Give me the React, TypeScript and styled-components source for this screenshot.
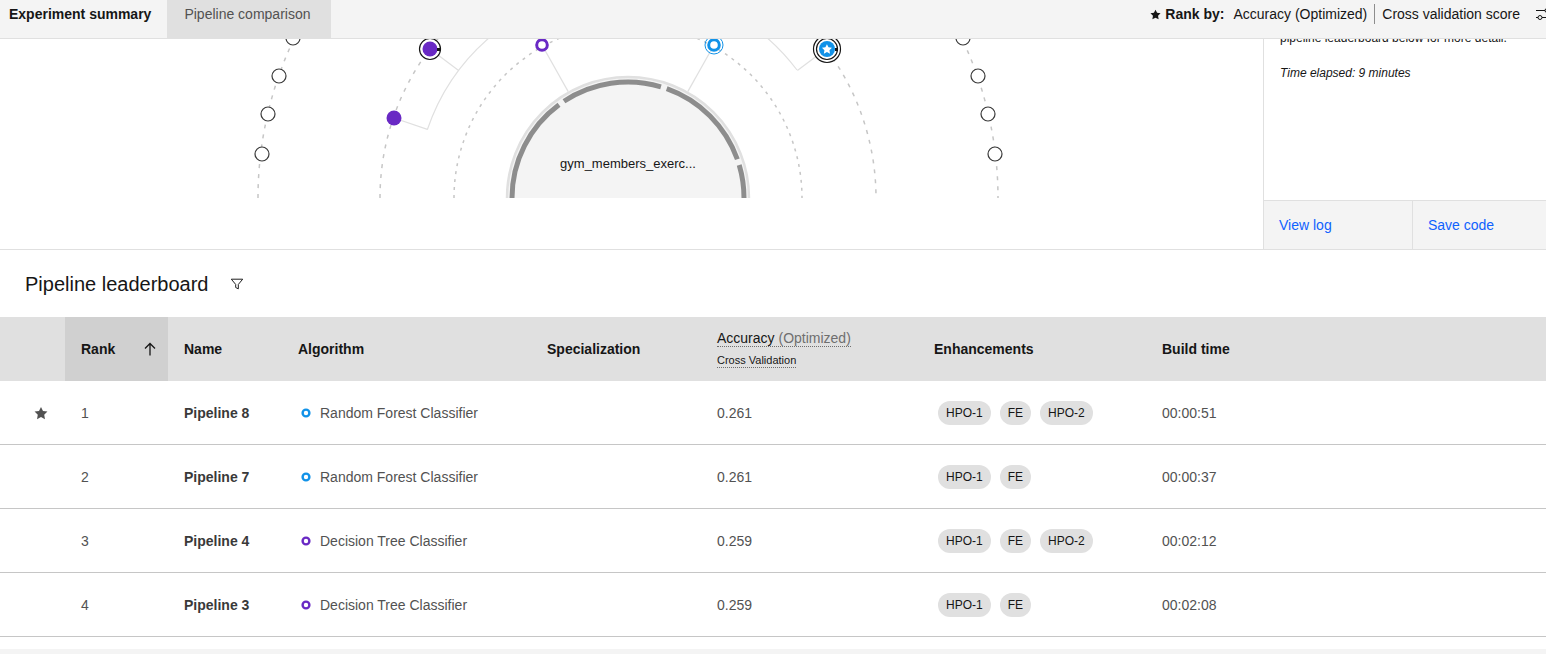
import React from 'react';
import styled, { createGlobalStyle } from 'styled-components';

const GlobalStyle = createGlobalStyle`
  html, body { margin: 0; padding: 0; background: #f4f4f4; }
  body { font-family: "Liberation Sans", Arial, sans-serif; color: #161616; overflow: hidden; }
  * { box-sizing: border-box; }
`;

const Page = styled.div`
  width: 1546px;
  background: #ffffff;
  padding-bottom: 12px;
`;

const TopBar = styled.div`
  display: flex;
  align-items: flex-start;
  height: 39px;
  background: #f4f4f4;
  border-bottom: 1px solid #e0e0e0;
  overflow: hidden;
`;

const Tab = styled.div<{ $active?: boolean }>`
  height: 38px;
  padding: 5px 17px 0;
  line-height: 18px;
  font-size: 14px;
  white-space: nowrap;
  font-weight: ${(p) => (p.$active ? 700 : 400)};
  color: ${(p) => (p.$active ? '#161616' : '#525252')};
  background: ${(p) => (p.$active ? '#f4f4f4' : '#e0e0e0')};
  min-width: ${(p) => (p.$active ? '167px' : '164px')};
  &:first-child { padding-left: 9px; padding-right: 16px; }
`;

const RankBy = styled.div`
  margin-left: auto;
  margin-right: -22px;
  display: flex;
  align-items: center;
  height: 28px;
  font-size: 14px;
  white-space: nowrap;
  flex-shrink: 0;
`;

const RankLabel = styled.span`
  display: flex;
  align-items: center;
  gap: 4px;
  font-weight: 700;
  margin-right: 9px;
`;

const RankOption = styled.span`
  color: #161616;
`;

const Divider = styled.span`
  width: 1px;
  height: 20px;
  background: #8d8d8d;
  margin: 0 7px;
`;

const AdjustIcon = styled.svg`
  margin-left: 16px;
  margin-right: 16px;
  flex-shrink: 0;
`;

const Summary = styled.div`
  display: flex;
  height: 211px;
  border-bottom: 1px solid #e0e0e0;
  background: #ffffff;
`;

const Diagram = styled.div`
  flex: 1;
  overflow: hidden;
  svg { display: block; }
`;

const SidePanel = styled.div`
  width: 283px;
  border-left: 1px solid #e0e0e0;
  display: flex;
  flex-direction: column;
`;

const PanelBody = styled.div`
  flex: 1;
  overflow: hidden;
  padding: 0 16px;
`;

const Desc = styled.p`
  margin: -10px 0 0;
  font-size: 12px;
  line-height: 18px;
  white-space: nowrap;
`;

const Elapsed = styled.p`
  margin: 17px 0 0;
  font-size: 12px;
  line-height: 18px;
  font-style: italic;
`;

const PanelActions = styled.div`
  display: flex;
  height: 49px;
  border-top: 1px solid #e0e0e0;
  background: #f4f4f4;
`;

const ActionLink = styled.a`
  display: flex;
  align-items: center;
  width: 148px;
  padding-left: 15px;
  font-size: 14px;
  color: #0f62fe;
  text-decoration: none;
  & + & { flex: 1; border-left: 1px solid #e0e0e0; padding-left: 15px; }
`;

const LeaderHead = styled.div`
  display: flex;
  align-items: center;
  gap: 22px;
  padding: 20px 25px 19px;
`;

const Title = styled.h2`
  margin: 0;
  font-size: 20px;
  line-height: 28px;
  font-weight: 400;
  color: #161616;
`;

const COLS = '65px 103px 114px 249px 170px 217px 228px 1fr';

const HeadRow = styled.div`
  display: grid;
  grid-template-columns: ${COLS};
  height: 64px;
  background: #e0e0e0;
`;

const Row = styled.div`
  display: grid;
  grid-template-columns: ${COLS};
  height: 64px;
  border-bottom: 1px solid #c6c6c6;
  background: #ffffff;
`;

const HeadCell = styled.div<{ $sorted?: boolean }>`
  display: flex;
  align-items: center;
  justify-content: space-between;
  padding: 0 10px 0 16px;
  font-size: 14px;
  font-weight: 700;
  color: #161616;
  background: ${(p) => (p.$sorted ? '#d0d0d0' : 'transparent')};
`;

const MetricHead = styled.div`
  display: flex;
  flex-direction: column;
  justify-content: center;
  align-items: flex-start;
  gap: 6px;
  padding: 0 16px;
`;

const MetricMain = styled.span`
  font-size: 14px;
  line-height: 16px;
  color: #161616;
  border-bottom: 1px dotted #6f6f6f;
`;

const MetricNote = styled.span`
  color: #6f6f6f;
`;

const MetricSub = styled.span`
  font-size: 11px;
  line-height: 14px;
  color: #161616;
  border-bottom: 1px dotted #6f6f6f;
`;

const Cell = styled.div<{ $bold?: boolean }>`
  display: flex;
  align-items: center;
  gap: 6px;
  padding: 0 16px;
  font-size: 14px;
  font-weight: ${(p) => (p.$bold ? 700 : 400)};
  color: ${(p) => (p.$bold ? '#393939' : '#525252')};
  white-space: nowrap;
`;

const StarCell = styled.div`
  display: flex;
  align-items: center;
  padding-left: 34px;
`;

const Tags = styled.div`
  display: flex;
  align-items: center;
  gap: 9px;
  padding-left: 20px;
`;

const Tag = styled.span`
  display: inline-flex;
  align-items: center;
  height: 24px;
  padding: 0 8px;
  border-radius: 12px;
  background: #e0e0e0;
  color: #161616;
  font-size: 12px;
`;

const PURPLE = '#6929c4';
const BLUE = '#1192e8';

const StarIcon = ({ size, color }: { size: number; color: string }) => (
  <svg width={size} height={size} viewBox="0 0 32 32">
    <path
      fill={color}
      d="M16 2l-4.55 9.22-10.17 1.47 7.36 7.18L6.9 30 16 25.22 25.1 30l-1.74-10.13 7.36-7.17-10.17-1.48z"
    />
  </svg>
);

const AlgoDot = ({ color }: { color: string }) => (
  <svg width="16" height="16" viewBox="0 0 16 16">
    <circle cx="8" cy="8" r="3.4" fill="none" stroke={color} strokeWidth="2.4" />
  </svg>
);

const CX = 628;
const CY = 198;
const pt = (r: number, deg: number) => {
  const a = (deg * Math.PI) / 180;
  return [CX + r * Math.cos(a), CY - r * Math.sin(a)];
};
const angOf = (x: number, y: number) => (Math.atan2(CY - y, x - CX) * 180) / Math.PI;
const arc = (r: number, a1: number, a2: number) => {
  const [x1, y1] = pt(r, a1);
  const [x2, y2] = pt(r, a2);
  const large = Math.abs(a1 - a2) > 180 ? 1 : 0;
  return `M ${x1} ${y1} A ${r} ${r} 0 ${large} 1 ${x2} ${y2}`;
};
const radial = (x: number, y: number, r: number) => {
  const [x2, y2] = pt(r, angOf(x, y));
  return `M ${x} ${y} L ${x2} ${y2}`;
};

const PipelineDiagram = () => {
  const segs: [number, number][] = [
    [180, 126.5],
    [123.5, 73.5],
    [70.5, 19.5],
    [16.5, 0],
  ];
  const outer = [
    [293, 38],
    [279, 76],
    [268, 114],
    [262, 154],
    [963, 38],
    [978, 76],
    [988, 114],
    [995, 154],
  ];
  return (
    <svg width="1263" height="159" viewBox="0 39 1263 159">
      <g fill="none" stroke="#c6c6c6" strokeWidth="1.5">
        <path d={arc(370, 180, 0)} strokeDasharray="4 6" />
        <path d={arc(248, 180, 0)} strokeDasharray="4 6" />
        <path d={arc(174, 180, 0)} strokeDasharray="3 5" />
      </g>
      <g fill="none" stroke="#e0e0e0" strokeWidth="1.2">
        <path d={arc(212, angOf(428, 130), angOf(797, 70))} />
        <path d={radial(542, 45, 122)} />
        <path d={radial(714, 45, 122)} />
        <path d={radial(430, 49, 212)} />
        <path d={radial(394, 118, 212)} />
        <path d={radial(826, 49, 212)} />
      </g>
      <circle cx={CX} cy={CY} r="121" fill="#f4f4f4" stroke="#e0e0e0" strokeWidth="2.5" />
      <g fill="none" stroke="#8d8d8d" strokeWidth="5">
        {segs.map(([a, b]) => (
          <path key={a} d={arc(116, a, b)} />
        ))}
      </g>
      <text
        x={CX}
        y="168"
        textAnchor="middle"
        fontSize="13"
        fontFamily="'Liberation Sans', Arial, sans-serif"
        fill="#161616"
      >
        gym_members_exerc...
      </text>
      {outer.map(([x, y]) => (
        <circle key={`${x}-${y}`} cx={x} cy={y} r="7" fill="#ffffff" stroke="#393939" strokeWidth="1.2" />
      ))}
      <circle cx="542" cy="45" r="5.3" fill="#ffffff" stroke={PURPLE} strokeWidth="3" />
      <circle cx="714" cy="45" r="5.3" fill="#ffffff" stroke={BLUE} strokeWidth="3" />
      <circle cx="714" cy="45" r="9" fill="none" stroke={BLUE} strokeWidth="1" />
      <circle cx="394" cy="118" r="7.5" fill={PURPLE} />
      <circle cx="430" cy="49" r="10.5" fill="#ffffff" stroke="#161616" strokeWidth="1.2" />
      <circle cx="430" cy="49" r="7.5" fill={PURPLE} />
      <rect x="437" y="48" width="3" height="3" fill="#161616" />
      <circle cx="827" cy="49" r="13.5" fill="#ffffff" stroke="#161616" strokeWidth="1.2" />
      <circle cx="827" cy="49" r="10.5" fill="none" stroke="#161616" strokeWidth="1.2" />
      <circle cx="827" cy="49" r="8" fill={BLUE} />
      <g transform="translate(821.5 43.5) scale(0.34)">
        <path
          fill="#ffffff"
          d="M16 2l-4.55 9.22-10.17 1.47 7.36 7.18L6.9 30 16 25.22 25.1 30l-1.74-10.13 7.36-7.17-10.17-1.48z"
        />
      </g>
      <rect x="835" y="48" width="3" height="3" fill="#161616" />
    </svg>
  );
};

type Pipe = {
  rank: number;
  name: string;
  algo: string;
  color: string;
  acc: string;
  tags: string[];
  time: string;
  star?: boolean;
};

const pipes: Pipe[] = [
  { rank: 1, name: 'Pipeline 8', algo: 'Random Forest Classifier', color: BLUE, acc: '0.261', tags: ['HPO-1', 'FE', 'HPO-2'], time: '00:00:51', star: true },
  { rank: 2, name: 'Pipeline 7', algo: 'Random Forest Classifier', color: BLUE, acc: '0.261', tags: ['HPO-1', 'FE'], time: '00:00:37' },
  { rank: 3, name: 'Pipeline 4', algo: 'Decision Tree Classifier', color: PURPLE, acc: '0.259', tags: ['HPO-1', 'FE', 'HPO-2'], time: '00:02:12' },
  { rank: 4, name: 'Pipeline 3', algo: 'Decision Tree Classifier', color: PURPLE, acc: '0.259', tags: ['HPO-1', 'FE'], time: '00:02:08' },
];

export default function App() {
  return (
    <Page>
      <GlobalStyle />
      <TopBar>
        <Tab $active>Experiment summary</Tab>
        <Tab>Pipeline comparison</Tab>
        <RankBy>
          <RankLabel>
            <StarIcon size={11} color="#161616" />
            Rank by:
          </RankLabel>
          <RankOption>Accuracy (Optimized)</RankOption>
          <Divider />
          <RankOption>Cross validation score</RankOption>
          <AdjustIcon width="16" height="16" viewBox="0 0 16 16">
            <g fill="none" stroke="#161616" strokeWidth="1">
              <line x1="0" y1="4.5" x2="16" y2="4.5" />
              <line x1="0" y1="11.5" x2="16" y2="11.5" />
              <circle cx="11" cy="4.5" r="2" fill="#f4f4f4" />
              <circle cx="4" cy="11.5" r="2" fill="#f4f4f4" />
            </g>
          </AdjustIcon>
        </RankBy>
      </TopBar>

      <Summary>
        <Diagram>
          <PipelineDiagram />
        </Diagram>
        <SidePanel>
          <PanelBody>
            <Desc>pipeline leaderboard below for more detail.</Desc>
            <Elapsed>Time elapsed: 9 minutes</Elapsed>
          </PanelBody>
          <PanelActions>
            <ActionLink href="#">View log</ActionLink>
            <ActionLink href="#">Save code</ActionLink>
          </PanelActions>
        </SidePanel>
      </Summary>

      <LeaderHead>
        <Title>Pipeline leaderboard</Title>
        <svg width="14" height="14" viewBox="0 0 16 16">
          <path d="M1.5 2.5h13L9.5 8.5v5l-3-1.5V8.5z" fill="none" stroke="#161616" strokeWidth="1.1" strokeLinejoin="round" />
        </svg>
      </LeaderHead>

      <HeadRow>
        <HeadCell />
        <HeadCell $sorted>
          Rank
          <svg width="16" height="16" viewBox="0 0 16 16">
            <path d="M8 2.5v12M3 7.5l5-5 5 5" fill="none" stroke="#161616" strokeWidth="1.3" />
          </svg>
        </HeadCell>
        <HeadCell>Name</HeadCell>
        <HeadCell>Algorithm</HeadCell>
        <HeadCell>Specialization</HeadCell>
        <MetricHead>
          <MetricMain>
            Accuracy <MetricNote>(Optimized)</MetricNote>
          </MetricMain>
          <MetricSub>Cross Validation</MetricSub>
        </MetricHead>
        <HeadCell>Enhancements</HeadCell>
        <HeadCell>Build time</HeadCell>
      </HeadRow>

      {pipes.map((p) => (
        <Row key={p.rank}>
          <StarCell>{p.star && <StarIcon size={14} color="#525252" />}</StarCell>
          <Cell>{p.rank}</Cell>
          <Cell $bold>{p.name}</Cell>
          <Cell>
            <AlgoDot color={p.color} />
            {p.algo}
          </Cell>
          <Cell />
          <Cell>{p.acc}</Cell>
          <Tags>
            {p.tags.map((t) => (
              <Tag key={t}>{t}</Tag>
            ))}
          </Tags>
          <Cell>{p.time}</Cell>
        </Row>
      ))}
    </Page>
  );
}
